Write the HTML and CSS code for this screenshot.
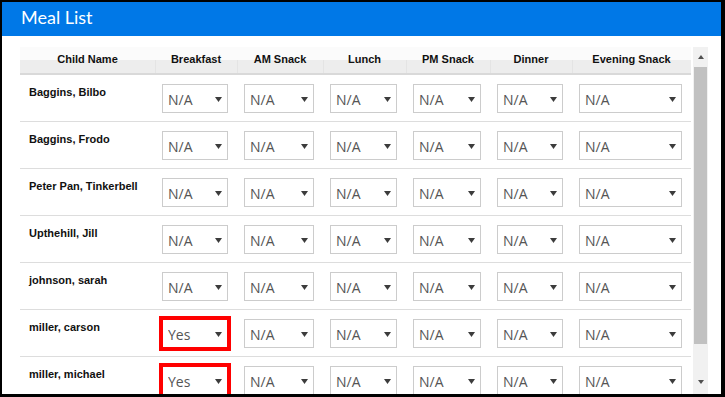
FILE: index.html
```html
<!DOCTYPE html>
<html lang="en">
<head>
    <meta charset="UTF-8">
    <title>Meal List</title>
    <link rel="stylesheet" href="styles.css">
</head>
<body>
    <div class="window">
        <div class="panel-title">Meal List</div>
        <div class="panel-body">
            <div class="table-wrap">
                <table class="meal-table">
                    <colgroup>
                        <col class="col-name">
                        <col class="col-breakfast">
                        <col class="col-am">
                        <col class="col-lunch">
                        <col class="col-pm">
                        <col class="col-dinner">
                        <col class="col-evening">
                    </colgroup>
                    <thead>
                        <tr>
                            <th>Child Name</th>
                            <th>Breakfast</th>
                            <th>AM Snack</th>
                            <th>Lunch</th>
                            <th>PM Snack</th>
                            <th>Dinner</th>
                            <th>Evening Snack</th>
                        </tr>
                    </thead>
                    <tbody id="mealTableBody"></tbody>
                </table>
            </div>
            <div class="scrollbar">
                <div class="scroll-btn"><span class="arrow-up"></span></div>
                <div class="scroll-track"><div class="scroll-thumb"></div></div>
                <div class="scroll-btn bottom"><span class="arrow-down"></span></div>
            </div>
        </div>
    </div>
    <script>
        // children and what they had for each meal
        const children = [
            { name: 'Baggins, Bilbo', meals: ['N/A', 'N/A', 'N/A', 'N/A', 'N/A', 'N/A'] },
            { name: 'Baggins, Frodo', meals: ['N/A', 'N/A', 'N/A', 'N/A', 'N/A', 'N/A'] },
            { name: 'Peter Pan, Tinkerbell', meals: ['N/A', 'N/A', 'N/A', 'N/A', 'N/A', 'N/A'] },
            { name: 'Upthehill, Jill', meals: ['N/A', 'N/A', 'N/A', 'N/A', 'N/A', 'N/A'] },
            { name: 'johnson, sarah', meals: ['N/A', 'N/A', 'N/A', 'N/A', 'N/A', 'N/A'] },
            { name: 'miller, carson', meals: ['Yes', 'N/A', 'N/A', 'N/A', 'N/A', 'N/A'] },
            { name: 'miller, michael', meals: ['Yes', 'N/A', 'N/A', 'N/A', 'N/A', 'N/A'] }
        ];

        const options = ['N/A', 'Yes', 'No'];

        // build one dropdown
        function renderSelect(value) {
            let html = '<div class="select-box' + (value === 'Yes' ? ' highlight' : '') + '">' +
                '<select class="meal-select">';
            options.forEach((opt) => {
                html += '<option' + (opt === value ? ' selected' : '') + '>' + opt + '</option>';
            });
            html += '</select>' +
                '<svg class="select-arrow" width="7" height="5" viewBox="0 0 7 5"><polygon points="0,0 7,0 3.5,5" fill="#3c3c3c"/></svg>' +
                '</div>';
            return html;
        }

        // render the table rows
        function renderMealTable() {
            const tbody = document.getElementById('mealTableBody');
            tbody.innerHTML = '';

            children.forEach((child) => {
                const row = document.createElement('tr');
                let html = '<td class="name-cell">' + child.name + '</td>';
                child.meals.forEach((meal) => {
                    html += '<td>' + renderSelect(meal) + '</td>';
                });
                row.innerHTML = html;
                tbody.appendChild(row);
            });
        }

        renderMealTable();
    </script>
</body>
</html>
```

FILE: styles.css
```css
body {
    margin: 0;
    font-family: "Liberation Sans", Arial, sans-serif;
}
.window {
    box-sizing: border-box;
    width: 725px;
    height: 397px;
    border-style: solid;
    border-color: #000;
    border-width: 2px 4px 3px 2px;
    background-color: #fff;
    display: flex;
    flex-direction: column;
}
.panel-title {
    height: 34px;
    line-height: 30px;
    padding-left: 19px;
    background-color: #0078e7;
    color: #fff;
    font-family: Lato, "Liberation Sans", sans-serif;
    font-size: 18px;
}
.panel-body {
    flex: 1;
    display: flex;
    gap: 2px;
    padding: 11px 13px 0 18px;
    overflow: hidden;
}
.table-wrap {
    flex: 1;
    overflow: hidden;
}
.meal-table {
    width: 100%;
    table-layout: fixed;
    border-collapse: collapse;
}
.col-name { width: 135px; }
.col-breakfast { width: 82px; }
.col-am { width: 86px; }
.col-lunch { width: 83px; }
.col-pm { width: 84px; }
.col-dinner { width: 82px; }
.col-evening { width: 119px; }
.meal-table th {
    padding: 5px 4px 7px;
    line-height: 14px;
    font-size: 11px;
    font-weight: bold;
    color: #111;
    text-align: center;
    border-bottom: 2px solid #d9d9d9;
    background: linear-gradient(#fbfbfb 50%, #ededed 50%);
}
.meal-table th + th {
    background:
        linear-gradient(#e4e4e4, #e4e4e4) left bottom / 1px 50% no-repeat,
        linear-gradient(#fbfbfb 50%, #ededed 50%);
}
.meal-table td {
    padding: 9px 9px 8px 7px;
    border-bottom: 1px solid #ddd;
    vertical-align: top;
}
.meal-table td.name-cell {
    padding: 10px 9px 0;
    line-height: 14px;
    font-size: 11px;
    font-weight: bold;
    color: #111;
    white-space: nowrap;
}
.select-box {
    position: relative;
}
.meal-select {
    display: block;
    box-sizing: border-box;
    width: 100%;
    height: 29px;
    padding: 2px 18px 0 5px;
    border: 1px solid #ccc;
    border-radius: 0;
    background-color: #fff;
    appearance: none;
    -webkit-appearance: none;
    font-family: "Open Sans", "Liberation Sans", sans-serif;
    font-size: 14px;
    color: #555;
}
.select-box.highlight .meal-select {
    border-color: #f00;
    outline: 3px solid #f00;
}
.select-arrow {
    position: absolute;
    right: 6px;
    top: 13px;
}
.scrollbar {
    width: 15px;
    display: flex;
    flex-direction: column;
    background-color: #f1f1f1;
}
.scroll-btn {
    height: 20px;
    display: flex;
    align-items: center;
    justify-content: center;
}
.scroll-btn.bottom {
    height: 14px;
    align-items: flex-start;
    padding-top: 1px;
}
.arrow-up {
    border-left: 3.5px solid transparent;
    border-right: 3.5px solid transparent;
    border-bottom: 4px solid #505050;
}
.arrow-down {
    border-left: 3.5px solid transparent;
    border-right: 3.5px solid transparent;
    border-top: 4px solid #505050;
}
.scroll-track {
    flex: 1;
    padding: 0 1px;
}
.scroll-thumb {
    height: 277px;
    background-color: #c1c1c1;
}
```
